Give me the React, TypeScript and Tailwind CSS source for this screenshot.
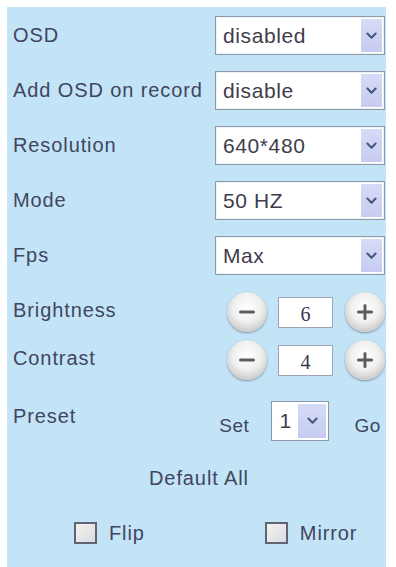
import React from "react";

type SelectRow = { label: string; value: string };

const selectRows: SelectRow[] = [
  { label: "OSD", value: "disabled" },
  { label: "Add OSD on record", value: "disable" },
  { label: "Resolution", value: "640*480" },
  { label: "Mode", value: "50 HZ" },
  { label: "Fps", value: "Max" },
];

const font = "font-['Liberation_Sans',Arial,sans-serif]";

function Chevron({ size = 11 }: { size?: number }) {
  return (
    <svg width={size} height={size * 0.7} viewBox="0 0 12 8" fill="none">
      <path d="M1.5 1.5 6 6l4.5-4.5" stroke="#46557f" strokeWidth={2.2} strokeLinecap="round" strokeLinejoin="round" />
    </svg>
  );
}

function FakeSelect({ value, className = "" }: { value: string; className?: string }) {
  return (
    <div
      className={`flex items-stretch bg-white border border-[#8d9aa8] shadow-[inset_0_0_0_1px_#eef2f6] ${className}`}
    >
      <div className="flex-1 flex items-center pl-[7px] text-[21px] tracking-[0.6px] text-[#403c4c] leading-none">
        {value}
      </div>
      <div className="w-[21px] my-[2px] mr-[2px] flex items-center justify-center bg-gradient-to-b from-[#d6dbf7] to-[#c6ccf1]">
        <Chevron />
      </div>
    </div>
  );
}

function RoundButton({ sign }: { sign: "-" | "+" }) {
  return (
    <div className="w-[40px] h-[40px] rounded-full flex items-center justify-center bg-[radial-gradient(circle_at_50%_40%,#ffffff_0%,#f0f0f0_45%,#c6c6c6_80%,#9a9a9a_100%)] shadow-[0_1px_2px_rgba(60,70,90,0.5)]">
      <svg width="20" height="20" viewBox="0 0 20 20">
        <path d="M3.5 10h13" stroke="#5a5e64" strokeWidth={3} strokeLinecap="round" />
        {sign === "+" && <path d="M10 3.5v13" stroke="#5a5e64" strokeWidth={3} strokeLinecap="round" />}
      </svg>
    </div>
  );
}

function Stepper({ label, value }: { label: string; value: number }) {
  return (
    <div className="flex items-center justify-between h-[40px]">
      <span className="text-[20px] tracking-[0.9px] -mt-[4px]">{label}</span>
      <div className="flex items-center">
        <RoundButton sign="-" />
        <div className="ml-[11px] mr-[12px] w-[55px] h-[31px] bg-white border border-[#9aa6b3] flex items-center justify-center pt-[4px] text-[20px] text-[#3a3550] font-['Liberation_Serif',serif]">
          {value}
        </div>
        <RoundButton sign="+" />
      </div>
    </div>
  );
}

function Checkbox({ label }: { label: string }) {
  return (
    <div className="flex items-center gap-[12px]">
      <div className="w-[23px] h-[22px] border-2 border-[#5f6577] bg-gradient-to-br from-[#f5f2ec] to-[#d8dce3]" />
      <span className="text-[20px] tracking-[0.9px]">{label}</span>
    </div>
  );
}

export default function App() {
  return (
    <div className={`w-[396px] h-[567px] bg-white pl-[7px] pt-[7px] overflow-hidden ${font}`}>
      <div className="w-[379px] h-[560px] bg-[#c3e3f6] pl-[6px] pr-[1px] text-[#404660]">
        {/* select rows */}
        <div className="flex flex-col gap-[16px] pt-[9px]">
          {selectRows.map((row) => (
            <div key={row.label} className="flex items-center justify-between">
              <span className="text-[20px] tracking-[0.9px] -mt-[2px]">{row.label}</span>
              <FakeSelect value={row.value} className="w-[170px] h-[39px]" />
            </div>
          ))}
        </div>

        {/* brightness / contrast */}
        <div className="flex flex-col gap-[8px] mt-[17px]">
          <Stepper label="Brightness" value={6} />
          <Stepper label="Contrast" value={4} />
        </div>

        {/* preset */}
        <div className="flex items-center justify-between mt-[21px] h-[40px]">
          <span className="text-[20px] tracking-[0.9px] -mt-[10px]">Preset</span>
          <div className="flex items-center mr-[4px]">
            <span className="text-[19px] tracking-[0.6px] mt-[10px]">Set</span>
            <div className="ml-[22px] w-[58px] h-[40px] flex items-stretch bg-white border border-[#8d9aa8]">
              <div className="flex-1 flex items-center pl-[7px] text-[21px] text-[#403c4c]">1</div>
              <div className="w-[28px] my-[2px] mr-[2px] flex items-center justify-center bg-gradient-to-b from-[#d6dbf7] to-[#c6ccf1]">
                <Chevron />
              </div>
            </div>
            <span className="ml-[25px] text-[19px] tracking-[0.6px] mt-[10px]">Go</span>
          </div>
        </div>

        {/* default all */}
        <div className="flex justify-center mt-[22px]">
          <span className="text-[20px] tracking-[0.9px]">Default All</span>
        </div>

        {/* flip / mirror */}
        <div className="flex items-center mt-[25px] pl-[61px] gap-[120px]">
          <Checkbox label="Flip" />
          <Checkbox label="Mirror" />
        </div>
      </div>
    </div>
  );
}
